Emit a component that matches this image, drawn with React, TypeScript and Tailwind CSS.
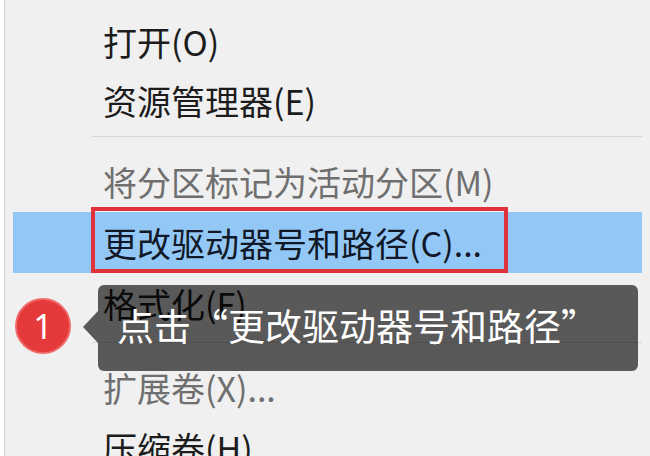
import * as React from "react";

type Item = { label: string; disabled?: boolean; selected?: boolean };

const cjk = "font-['Microsoft_YaHei','Noto_Sans_CJK_SC',sans-serif]";

function Row({ item, h }: { item: Item; h: string }) {
  return (
    <div
      className={`relative mx-[8px] flex items-center pl-[90px] ${h} ${
        item.selected ? "bg-[#93c8f6] text-[#111827]" : ""
      } ${item.disabled ? "text-[#6f6f6f]" : "text-[#1c1c1c]"}`}
    >
      <span className="text-[34px] leading-none whitespace-nowrap">{item.label}</span>
      {item.selected && (
        // red annotation frame drawn over the highlighted row
        <div className="absolute -top-[5px] bottom-0 left-[78px] w-[417px] border-[4px] border-[#e0323a]" />
      )}
    </div>
  );
}

function Separator({ className }: { className: string }) {
  return (
    <div className={className}>
      <div className="ml-[87px] mr-[8px] h-px bg-[#d6d6d6]" />
    </div>
  );
}

export default function App() {
  return (
    <div className={`relative h-[456px] w-[650px] overflow-hidden bg-white pl-[4px] ${cjk}`} lang="zh-CN">
      <div className="h-full border-l border-[#d2d2d2] bg-[#f0f0f0] pt-[12px]">
        <Row item={{ label: "打开(O)" }} h="h-[60px]" />
        <Row item={{ label: "资源管理器(E)" }} h="h-[58px]" />
        <Separator className="pt-[6px] pb-[15px]" />
        <Row item={{ label: "将分区标记为活动分区(M)", disabled: true }} h="h-[60px]" />
        <Row item={{ label: "更改驱动器号和路径(C)...", selected: true }} h="h-[61px]" />
        <Row item={{ label: "格式化(F)" }} h="h-[61px]" />
        <Separator className="pt-[8px] pb-[15px]" />
        <Row item={{ label: "扩展卷(X)...", disabled: true }} h="h-[60px]" />
        <Row item={{ label: "压缩卷(H)..." }} h="h-[60px]" />
      </div>

      {/* step badge */}
      <div className="absolute left-[15px] top-[298px] flex h-[56px] w-[56px] items-center justify-center rounded-full border-2 border-[#f06a6a] bg-[#e5393b] font-['Noto_Sans',sans-serif] text-[34px] leading-none text-white">
        1
      </div>

      {/* tooltip */}
      <div className="absolute left-[98px] top-[285px] flex h-[86px] w-[540px] items-center rounded-[6px] bg-black/[0.63] pb-[6px] pl-[19px]">
        <div className="absolute -left-[15px] top-[26px] h-0 w-0 border-y-[16px] border-r-[15px] border-y-transparent border-r-black/[0.63]" />
        <span className="whitespace-nowrap text-[37px] leading-none text-white">点击“更改驱动器号和路径”</span>
      </div>
    </div>
  );
}
